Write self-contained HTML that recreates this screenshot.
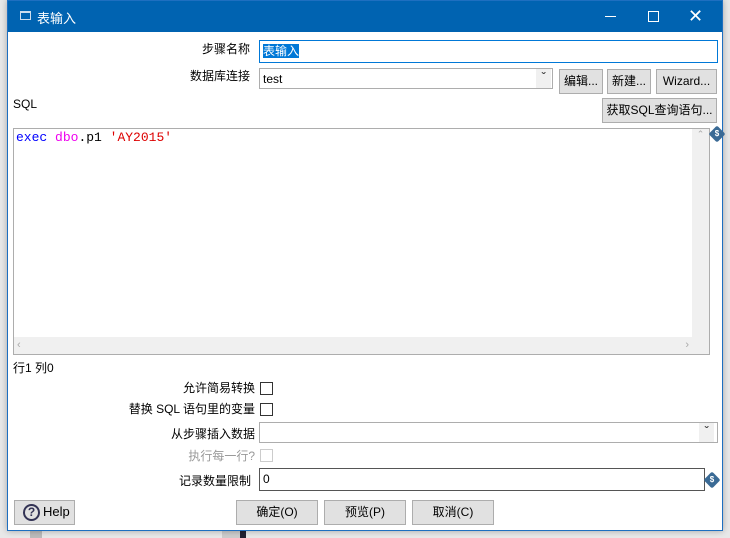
<!DOCTYPE html>
<html><head><meta charset="utf-8"><style>
*{box-sizing:border-box;margin:0;padding:0}
body{width:730px;height:538px;background:#e8e8e8;position:relative;overflow:hidden;font-family:"Liberation Sans","Noto Sans CJK SC",sans-serif;font-size:12px;color:#000}
.a{position:absolute}
.win{left:7px;top:0;width:716px;height:531px;background:#fff;border:1px solid #1e6fc0;box-shadow:0 0 6px rgba(0,0,0,.3)}
.title{left:0;top:0;width:714px;height:31px;background:#0063b1;color:#fff;font-size:13px}
.lbl{text-align:right;white-space:nowrap;line-height:16px}
.in{border:1px solid #adadad;background:#fff;line-height:20px;padding-left:3px}
.btn{background:#e1e1e1;border:1px solid #adadad;text-align:center;line-height:22px;white-space:nowrap}
.cb{width:13px;height:13px;border:1px solid #333;background:#fff}
.dl{width:15px;height:19px;background:#f0f0f0;color:#444;font-size:12px;font-weight:bold;text-align:center;line-height:17px}
.dol{width:12px;height:12px;background:#3a6a95;transform:rotate(45deg);border-radius:2px}
.dol span{display:block;transform:rotate(-45deg);color:#fff;font-size:8px;font-weight:bold;text-align:center;line-height:12px}
</style></head><body>
<div class="a" style="left:30px;top:530px;width:12px;height:8px;background:#bbb"></div>
<div class="a" style="left:222px;top:530px;width:20px;height:8px;background:#ccc"></div>
<div class="a" style="left:240px;top:530px;width:6px;height:8px;background:#223"></div>
<div class="a win">
 <div class="a title">
  <div class="a" style="left:12px;top:10px;width:11px;height:9px;border:1px solid #cde;border-top-width:2px"></div>
  <div class="a" style="left:29px;top:7px;font-size:13px">表输入</div>
  <div class="a" style="left:597px;top:15px;width:11px;height:1px;background:#fff"></div>
  <div class="a" style="left:640px;top:10px;width:11px;height:11px;border:1px solid #fff"></div>
  <div class="a" style="left:680px;top:3px;font-size:18px;line-height:24px">✕</div>
 </div>
 <div class="a lbl" style="right:472px;top:40px">步骤名称</div>
 <div class="a in" style="left:251px;top:39px;width:459px;height:23px;border-color:#0078d7"><span style="background:#0078d7;color:#fff">表输入</span></div>
 <div class="a lbl" style="right:472px;top:67px">数据库连接</div>
 <div class="a in" style="left:251px;top:67px;width:294px;height:21px">test</div>
 <div class="a dl" style="left:528px;top:68px">&#711;</div>
 <div class="a btn" style="left:551px;top:68px;width:44px;height:25px">编辑...</div>
 <div class="a btn" style="left:599px;top:68px;width:44px;height:25px">新建...</div>
 <div class="a btn" style="left:648px;top:68px;width:61px;height:25px">Wizard...</div>
 <div class="a" style="left:5px;top:96px">SQL</div>
 <div class="a btn" style="left:594px;top:97px;width:115px;height:25px">获取SQL查询语句...</div>
 <div class="a" style="left:5px;top:127px;width:697px;height:227px;border:1px solid #adadad;background:#fff">
  <div class="a" style="left:2px;top:1px;font-family:'Liberation Mono',monospace;font-size:13px;line-height:16px"><span style="color:#00f">exec</span> <span style="color:#e0e">dbo</span>.p1 <span style="color:#d00">'AY2015'</span></div>
  <div class="a" style="right:0;top:0;width:17px;height:208px;background:#f0f0f0;color:#aaa;text-align:center;font-size:9px">&#8963;</div>
  <div class="a" style="left:0;bottom:0;width:695px;height:17px;background:#f0f0f0;color:#aaa;font-size:11px;line-height:17px">&nbsp;&lsaquo;<span style="position:absolute;right:20px">&rsaquo;</span></div>
 </div>
 <div class="a dol" style="left:703px;top:127px"><span>$</span></div>
 <div class="a" style="left:5px;top:358px">行1 列0</div>
 <div class="a lbl" style="right:467px;top:379px">允许简易转换</div>
 <div class="a cb" style="left:252px;top:381px"></div>
 <div class="a lbl" style="right:467px;top:400px">替换 SQL 语句里的变量</div>
 <div class="a cb" style="left:252px;top:402px"></div>
 <div class="a lbl" style="right:467px;top:425px">从步骤插入数据</div>
 <div class="a in" style="left:251px;top:421px;width:459px;height:21px"></div>
 <div class="a dl" style="left:691px;top:422px">&#711;</div>
 <div class="a lbl" style="right:467px;top:447px;color:#999">执行每一行?</div>
 <div class="a cb" style="left:252px;top:448px;border-color:#ccc"></div>
 <div class="a lbl" style="right:471px;top:472px">记录数量限制</div>
 <div class="a in" style="left:251px;top:467px;width:446px;height:23px;border-color:#555">0</div>
 <div class="a dol" style="left:698px;top:473px"><span>$</span></div>
 <div class="a btn" style="left:6px;top:499px;width:61px;height:25px;text-align:left;padding-left:28px;font-size:13px">Help</div>
 <div class="a" style="left:15px;top:503px;width:17px;height:17px;border:2px solid #335;border-radius:50%;text-align:center;font-weight:bold;line-height:13px;font-size:12px;color:#335">?</div>
 <div class="a btn" style="left:228px;top:499px;width:82px;height:25px">确定(O)</div>
 <div class="a btn" style="left:316px;top:499px;width:82px;height:25px">预览(P)</div>
 <div class="a btn" style="left:404px;top:499px;width:82px;height:25px">取消(C)</div>
</div>
</body></html>
